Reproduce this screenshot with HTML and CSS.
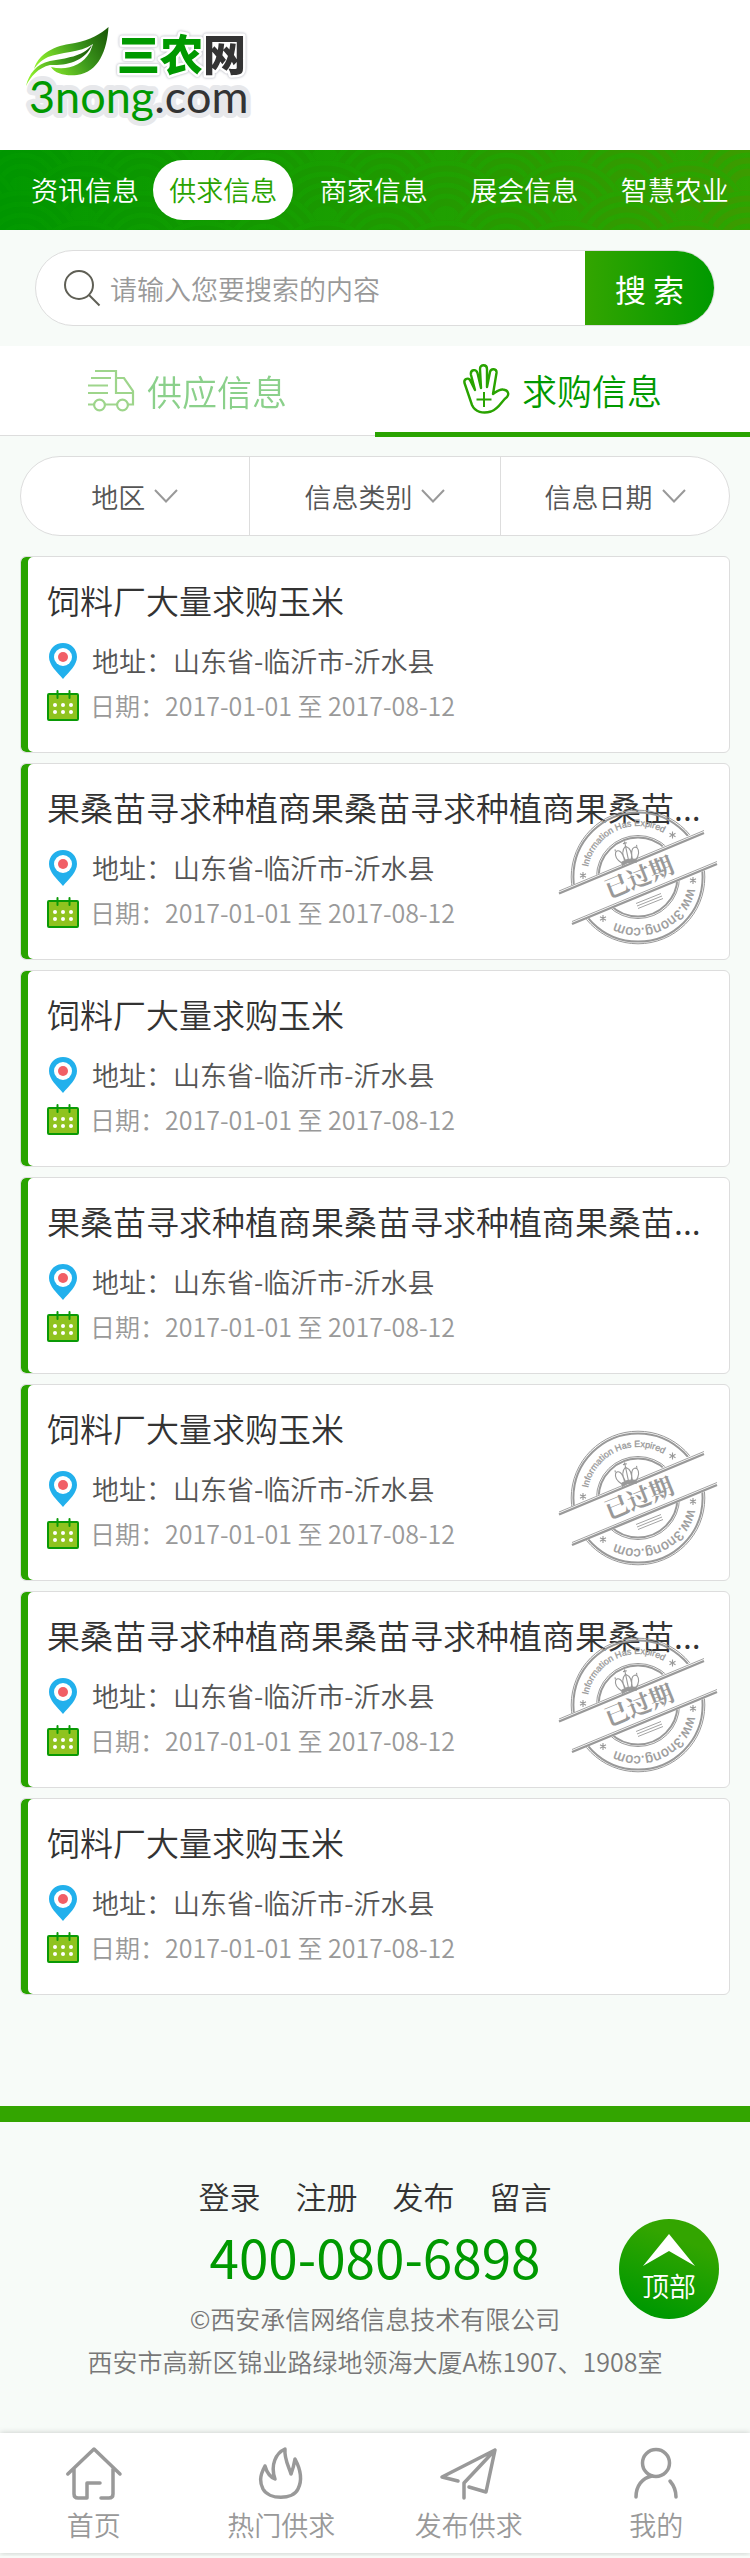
FILE: index.html
```html
<!DOCTYPE html>
<html lang="zh-CN">
<head>
<meta charset="utf-8">
<meta name="viewport" content="width=device-width, initial-scale=1">
<title>三农网 - 求购信息</title>
<link rel="stylesheet" href="styles.css">
</head>
<body>
<svg class="sprite" aria-hidden="true">
  <symbol id="pin" viewBox="0 0 28 36">
    <path fill="#22b0ec" d="M14 0C6 0 0 6 0 14c0 8 8 15 14 22 6-7 14-14 14-22C28 6 22 0 14 0z"/>
    <circle cx="14" cy="14" r="9" fill="#fff"/><circle cx="14" cy="14" r="5" fill="#f15f66"/>
  </symbol>
  <symbol id="calendar" viewBox="0 0 32 31">
    <rect x="1" y="4" width="30" height="26" rx="1" fill="#8fc31f" stroke="#0a9a06" stroke-width="2"/>
    <path d="M10.500 1v7M22.500 1v7" stroke="#0a9a06" stroke-width="2" stroke-linecap="round"/>
    <g fill="#fff"><circle cx="8" cy="15" r="2"/><circle cx="16" cy="15" r="2"/><circle cx="24" cy="15" r="2"/><circle cx="8" cy="22" r="2"/><circle cx="16" cy="22" r="2"/><circle cx="24" cy="22" r="2"/></g>
  </symbol>
  <symbol id="chevron" viewBox="0 0 24 14"><path d="M1 1l11 11.500L23 1" fill="none" stroke="#999" stroke-width="2"/></symbol>
  <clipPath id="stamp-clip"><path d="M0 0H160V14L0 82zM0 122L160 56V136H0z"/></clipPath>
  <path id="stamp-arc" d="M29 68a51 51 0 0 1 102 0a51 51 0 0 1 -102 0"/>
  <symbol id="stamp" viewBox="0 0 160 136">
    <g fill="none" stroke="#999" clip-path="url(#stamp-clip)">
      <circle cx="80" cy="68" r="66.800" stroke-width="1"/><circle cx="80" cy="68" r="64.600" stroke-width="2"/>
      <circle cx="80" cy="68" r="41.500" stroke-width="1"/><circle cx="80" cy="68" r="39.400" stroke-width="2"/>
    </g>
    <g stroke="#999" fill="none">
      <path d="M1 84.500L146 24M14 115L159 55" stroke-width="2.400"/>
      <path d="M1 82L146 21.500M14 112.500L159 52.500" stroke-width="0.900"/>
      <path d="M78 94.500l25-10M79 97l25-10M80 99.500l25-10" stroke-width="0.900"/>
    </g>
    <g transform="rotate(-12 69 44)" fill="none" stroke="#999" stroke-width="1.100">
      <path d="M62 53c-4-4-6-8-4-12 3-3 7 0 7 10M76 53c4-4 6-8 4-12-3-3-7 0-7 10M66 51c-3-8 0-12 3-14 3 2 6 6 3 14M69 37v14"/>
      <path d="M62 52q7-3 14 0v3q-7-3-14 0z" fill="#999"/>
      <path d="M69 32v5M67 34h4M58 38v2M80 38v2"/>
    </g>
    <g fill="#999" stroke="#999" stroke-width="0.300" font-family="Liberation Sans, Arial, sans-serif">
      <text font-size="9"><textPath href="#stamp-arc" startOffset="10">Information Has Expired</textPath></text>
      <text font-size="14"><textPath href="#stamp-arc" startOffset="171">ww.3nong.com</textPath></text>
    </g>
    <g stroke="#999" stroke-width="1.100">
      <path id="ast" d="M25 63v7M22 64.800l6 3.500M28 64.800l-6 3.500"/>
      <use href="#ast" x="89.500" y="-40.500"/><use href="#ast" x="110" y="5"/><use href="#ast" x="20" y="43"/>
    </g>
    <text x="81" y="77" text-anchor="middle" transform="rotate(-22 81 68)" font-family="Noto Serif CJK SC, Noto Sans CJK SC, serif" font-weight="700" font-size="24" fill="#999">已过期</text>
  </symbol>
</svg>

<header class="header">
  <a href="#" class="logo" aria-label="三农网 3nong.com">
    <svg viewBox="22 24 230 108" width="230" height="108">
      <defs>
        <linearGradient id="leaf" x1="0" y1="0.600" x2="1" y2="0.200"><stop offset="0" stop-color="#8fee2c"/><stop offset="0.550" stop-color="#3d9a1c"/><stop offset="1" stop-color="#1c5c08"/></linearGradient>
      </defs>
      <text class="logo-cn" x="117" y="71">三农<tspan class="dark">网</tspan></text>
      <text class="logo-en" x="29" y="113">3nong<tspan class="dark">.com</tspan></text>
      <g fill="url(#leaf)">
        <path d="M34 69C40 50 60 45 75 43C90 40 101 34 108.500 27C107 50 99 72 77 75C66 76 55 74 51 67C66 71 82 66 90 52L93 44C80 53 60 52 48 57C40 61 37 65 34 69z"/>
        <path d="M26 86C29 74 36 64 50 61C66 58 82 57 92 45C86 60 68 66 50 65C38 68 31 76 26 86z"/>
      </g>
    </svg>
  </a>
</header>

<nav class="nav" aria-label="主导航">
  <svg class="nav-waves" aria-hidden="true" width="100%" height="100%">
    <defs>
      <g id="fan">
        <circle r="60" fill="#000"/>
        <g fill="none" stroke="#fff" stroke-width="5"><circle r="57"/><circle r="46"/><circle r="35"/><circle r="24"/></g>
        <circle r="14" fill="#fff"/>
      </g>
      <pattern id="waves" width="121" height="60" patternUnits="userSpaceOnUse" x="-38" y="10">
        <use href="#fan" x="60" y="-30"/><use href="#fan" x="0" y="0"/><use href="#fan" x="121" y="0"/>
        <use href="#fan" x="60" y="30"/><use href="#fan" x="0" y="60"/><use href="#fan" x="121" y="60"/>
        <use href="#fan" x="60" y="90"/><use href="#fan" x="0" y="120"/><use href="#fan" x="121" y="120"/>
      </pattern>
      <mask id="wave-mask"><rect width="100%" height="100%" fill="url(#waves)"/></mask>
      <linearGradient id="wave-fill"><stop offset="0" stop-color="#10b000" stop-opacity="0.120"/><stop offset="1" stop-color="#1cb000" stop-opacity="0.450"/></linearGradient>
    </defs>
    <rect width="100%" height="100%" fill="url(#wave-fill)" mask="url(#wave-mask)"/>
  </svg>
  <ul class="nav-list">
    <li><a href="#">资讯信息</a></li>
    <li><a href="#" class="current" aria-current="page">供求信息</a></li>
    <li><a href="#">商家信息</a></li>
    <li><a href="#">展会信息</a></li>
    <li><a href="#">智慧农业</a></li>
  </ul>
</nav>

<main>
  <form class="search" role="search">
    <label class="search-icon" for="q" aria-label="搜索">
      <svg width="36" height="36" viewBox="0 0 36 36" fill="none" stroke="#5f5f55" stroke-width="2"><circle cx="15" cy="15" r="14"/><path d="M25 25l10.500 10.500"/></svg>
    </label>
    <input id="q" type="text" placeholder="请输入您要搜索的内容">
    <button type="submit">搜 索</button>
  </form>

  <div class="tabs">
    <a href="#" class="tab">
      <svg width="46" height="42" viewBox="0 0 46 42" fill="none" stroke="#29a300" stroke-width="2.200"><path d="M7 1H28V23H45M28 8H36L45 21V34.500H40M3 8H23M0 15.500H20M0 23H20M0 34.500H6M17 34.500H29"/><circle cx="11.500" cy="35" r="5.400"/><circle cx="34.500" cy="35" r="5.400"/></svg>
      <span>供应信息</span>
    </a>
    <a href="#" class="tab active" aria-current="true">
      <svg width="46" height="50" viewBox="0 0 46 50" fill="none" stroke="#29a300" stroke-width="2.400" stroke-linejoin="round"><path d="M9 41L1.500 19C0.500 14.500 6 13 7.500 17L12 26L8 11C7 5.500 13 4.500 14.500 9L18 24L17 5C17 0 24 0 24 5L24 23L27 8C28 4 34 4.500 33.500 9L30 30C33 28 36 25 40 25.500C45 26 46.500 30 44 33C38 37 37 44 28 47.500C20 50 12 48 9 41z"/><path d="M21 28v15M13.500 35.500h15" stroke-width="2"/></svg>
      <span>求购信息</span>
    </a>
  </div>

  <div class="filters">
    <button type="button">地区<svg width="24" height="14"><use href="#chevron"/></svg></button>
    <button type="button">信息类别<svg width="24" height="14"><use href="#chevron"/></svg></button>
    <button type="button">信息日期<svg width="24" height="14"><use href="#chevron"/></svg></button>
  </div>

  <ul class="cards">
    <li class="card">
      <h2><a href="#">饲料厂大量求购玉米</a></h2>
      <p class="place"><svg width="32" height="36"><use href="#pin"/></svg>地址：山东省-临沂市-沂水县</p>
      <p class="date"><svg width="32" height="31"><use href="#calendar"/></svg>日期：2017-01-01 至 2017-08-12</p>
    </li>
    <li class="card">
      <h2><a href="#">果桑苗寻求种植商果桑苗寻求种植商果桑苗...</a></h2>
      <p class="place"><svg width="32" height="36"><use href="#pin"/></svg>地址：山东省-临沂市-沂水县</p>
      <p class="date"><svg width="32" height="31"><use href="#calendar"/></svg>日期：2017-01-01 至 2017-08-12</p>
      <svg class="stamp" width="160" height="136"><use href="#stamp"/></svg>
    </li>
    <li class="card">
      <h2><a href="#">饲料厂大量求购玉米</a></h2>
      <p class="place"><svg width="32" height="36"><use href="#pin"/></svg>地址：山东省-临沂市-沂水县</p>
      <p class="date"><svg width="32" height="31"><use href="#calendar"/></svg>日期：2017-01-01 至 2017-08-12</p>
    </li>
    <li class="card">
      <h2><a href="#">果桑苗寻求种植商果桑苗寻求种植商果桑苗...</a></h2>
      <p class="place"><svg width="32" height="36"><use href="#pin"/></svg>地址：山东省-临沂市-沂水县</p>
      <p class="date"><svg width="32" height="31"><use href="#calendar"/></svg>日期：2017-01-01 至 2017-08-12</p>
    </li>
    <li class="card">
      <h2><a href="#">饲料厂大量求购玉米</a></h2>
      <p class="place"><svg width="32" height="36"><use href="#pin"/></svg>地址：山东省-临沂市-沂水县</p>
      <p class="date"><svg width="32" height="31"><use href="#calendar"/></svg>日期：2017-01-01 至 2017-08-12</p>
      <svg class="stamp" width="160" height="136"><use href="#stamp"/></svg>
    </li>
    <li class="card">
      <h2><a href="#">果桑苗寻求种植商果桑苗寻求种植商果桑苗...</a></h2>
      <p class="place"><svg width="32" height="36"><use href="#pin"/></svg>地址：山东省-临沂市-沂水县</p>
      <p class="date"><svg width="32" height="31"><use href="#calendar"/></svg>日期：2017-01-01 至 2017-08-12</p>
      <svg class="stamp" width="160" height="136"><use href="#stamp"/></svg>
    </li>
    <li class="card">
      <h2><a href="#">饲料厂大量求购玉米</a></h2>
      <p class="place"><svg width="32" height="36"><use href="#pin"/></svg>地址：山东省-临沂市-沂水县</p>
      <p class="date"><svg width="32" height="31"><use href="#calendar"/></svg>日期：2017-01-01 至 2017-08-12</p>
    </li>
  </ul>
</main>

<footer class="footer">
  <div class="footer-links"><a href="#">登录</a><a href="#">注册</a><a href="#">发布</a><a href="#">留言</a></div>
  <a class="phone" href="tel:4000806898">400-080-6898</a>
  <p>©西安承信网络信息技术有限公司</p>
  <p>西安市高新区锦业路绿地领海大厦A栋1907、1908室</p>
  <a href="#" class="to-top">
    <svg width="52" height="32" viewBox="0 0 52 32"><path d="M26 0L52 32L26 17L0 32z" fill="#fff"/></svg>
    <span>顶部</span>
  </a>
</footer>

<nav class="tabbar" aria-label="底部导航">
  <a href="#"><svg width="56" height="53" viewBox="0 0 56 53"><path d="M1.800 27L28 2L54 27M8 22V47Q8 51 12 51H21V36H34M47 22V47Q47 51 43 51H35"/></svg>首页</a>
  <a href="#"><svg width="42" height="53" viewBox="0 0 42 53"><path d="M5 19C-1 30 0 36 3 42C9 53 33 53 38 42C42 34 42 25 35 12C34 18 33 22 31 27C29 20 24 12 25 2C16 6 10 18 15 32C10 30 7 26 5 19z"/></svg>热门供求</a>
  <a href="#"><svg width="57" height="53" viewBox="0 0 57 53"><path d="M18 34L2 30L55 3L46 45L29 40M55 3L24 36V51"/></svg>发布供求</a>
  <a href="#"><svg width="44" height="53" viewBox="0 0 44 53"><circle cx="22" cy="16" r="13.500"/><path d="M2 50C2 39 8 31 18 29M36 34Q42 41 42 50"/></svg>我的</a>
</nav>
</body>
</html>
```
FILE: styles.css
```css
* { box-sizing: border-box; margin: 0; padding: 0; }

body {
  background: #f7fbf8;
  color: #333;
  font-family: "Noto Sans CJK SC", sans-serif;
  font-weight: 350;
  font-size: 27px;
}

a { color: inherit; text-decoration: none; }
ul { list-style: none; }
button, input { font: inherit; color: inherit; border: 0; background: none; }
svg { display: block; flex: none; overflow: visible; }

.sprite { position: absolute; width: 0; height: 0; }

.header { height: 150px; padding: 24px 22px; background: #fff; }
.logo { display: inline-block; }
.logo-cn, .logo-en { fill: #009900; paint-order: stroke; stroke-linejoin: round; }
.logo-cn { font-size: 43px; font-weight: 900; stroke: #fff; stroke-width: 5px; filter: drop-shadow(0 0 1px #c4c6cc) drop-shadow(0 0 1px #dcdde2); }
.logo-en { font-family: Lato, sans-serif; font-size: 45px; font-weight: 400; stroke: #e7e8eb; stroke-width: 10px; }
.logo .dark { fill: #333; }

/* main navigation */
.nav { position: relative; background: linear-gradient(90deg, #009600, #3c9c00); }
.nav-waves { position: absolute; inset: 0; }
.nav-list { position: relative; display: flex; height: 80px; align-items: center; }
.nav-list li { flex: 1; display: flex; justify-content: center; color: #fff; }
.nav-list li:first-child { flex: 0 0 148px; padding-left: 22px; }
.nav-list a { line-height: 60px; white-space: nowrap; }
.nav-list .current { padding: 0 16px; border-radius: 30px; background: #fff; color: #29a300; }

/* search */
.search {
  display: flex;
  align-items: stretch;
  height: 76px;
  margin: 20px 35px;
  border: 1px solid #ddd;
  border-radius: 38px;
  background: #fff;
  overflow: hidden;
}
.search-icon { display: flex; align-items: center; padding: 0 10px 0 28px; }
.search input { flex: 1; min-width: 0; outline: 0; }
.search input::placeholder { color: #999; opacity: 1; }
.search button {
  width: 129px;
  background: linear-gradient(90deg, #33a500, #009900);
  color: #fff;
  font-size: 31px;
  font-weight: 400;
}

/* supply / demand tabs */
.tabs { display: flex; height: 90px; background: #fff; border-bottom: 1px solid #ddd; }
.tab { flex: 1; display: flex; align-items: center; justify-content: center; gap: 13px; font-size: 35px; color: #009900; }
.tab > * { opacity: 0.45; }
.tab.active { height: 91px; border-bottom: 5px solid #29a300; }
.tab.active > * { opacity: 1; }

/* filters */
.filters {
  display: flex;
  height: 80px;
  margin: 20px 20px;
  border: 1px solid #ddd;
  border-radius: 40px;
  background: #fff;
}
.filters button { flex: 10; display: flex; align-items: center; justify-content: center; gap: 9px; color: #555; }
.filters button:nth-child(2) { flex: 11; border: 1px solid #ddd; border-width: 0 1px; }

/* listing */
.cards { display: flex; flex-direction: column; gap: 10px; padding: 0 20px; }
.card {
  position: relative;
  padding: 19px 24px 26px 26px;
  border: 1px solid #ddd;
  border-radius: 6px;
  background: #fff;
  box-shadow: inset 7px 0 0 #29a300;
}
.card h2 { margin-bottom: 13px; font-size: 33px; font-weight: 350; line-height: 48px; white-space: nowrap; }
.card p { display: flex; align-items: center; gap: 13px; white-space: nowrap; }
.place { color: #555; line-height: 48px; }
.card .date { gap: 11px; color: #999; font-size: 25px; line-height: 41px; }
.stamp { position: absolute; right: 11px; top: 45px; }

/* footer */
.footer {
  position: relative;
  display: flex;
  flex-direction: column;
  align-items: center;
  margin-top: 111px;
  padding: 49px 20px 50px;
  border-top: 16px solid #33a500;
  color: #777;
  font-size: 25px;
}
.footer-links { display: flex; gap: 35px; color: #333; font-size: 31px; line-height: 50px; }
.phone { margin-bottom: 6px; color: #009900; font-size: 53px; font-weight: 400; line-height: 70px; }
.footer p { line-height: 43px; }
.to-top {
  position: absolute;
  top: 97px;
  right: 31px;
  display: flex;
  flex-direction: column;
  align-items: center;
  width: 100px;
  height: 100px;
  padding-top: 15px;
  border-radius: 50%;
  background: linear-gradient(20deg, #009900 15%, #33a500 75%);
  color: #fff;
  font-size: 27px;
  line-height: 40px;
}

/* bottom bar */
.tabbar {
  display: flex;
  margin-bottom: 3px;
  padding: 14px 0 8px;
  background: #fff;
  box-shadow: 0 0 6px rgba(0, 0, 0, 0.2);
  color: #999;
}
.tabbar a { flex: 1; display: flex; flex-direction: column; align-items: center; gap: 5px; line-height: 40px; }
.tabbar svg { fill: none; stroke: #999; stroke-width: 3.5px; stroke-linecap: round; stroke-linejoin: round; }
```
